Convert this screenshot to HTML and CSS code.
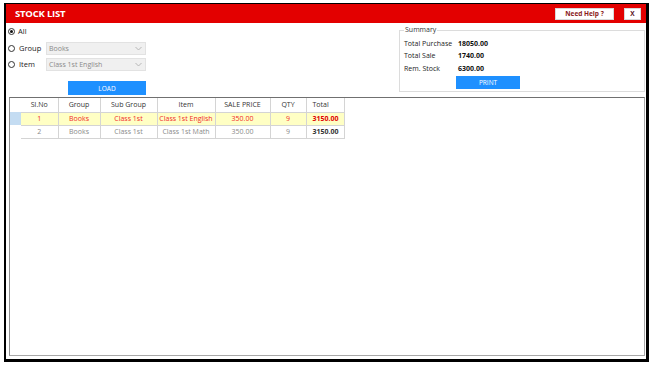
FILE: index.html
```html
<!DOCTYPE html>
<html>
<head>
<meta charset="utf-8">
<link rel="stylesheet" href="styles.css">
</head>
<body>
<div class="window">
  <div class="titlebar">
    <span class="title">STOCK LIST</span>
    <div class="tbtns">
      <span class="btn-help">Need Help ?</span>
      <span class="btn-x">X</span>
    </div>
  </div>
  <div class="top">
    <div class="filters">
      <div class="frow frow-all"><span class="radio checked"></span><span class="rlabel">All</span></div>
      <div class="frow"><span class="radio"></span><span class="rlabel lbl">Group</span>
        <div class="select"><span>Books</span><svg class="chev" width="7" height="5" viewBox="0 0 7 5"><path d="M0.5 1 L3.5 4 L6.5 1" fill="none" stroke="#b0b0b0" stroke-width="0.9"/></svg></div>
      </div>
      <div class="frow"><span class="radio"></span><span class="rlabel lbl">Item</span>
        <div class="select"><span>Class 1st English</span><svg class="chev" width="7" height="5" viewBox="0 0 7 5"><path d="M0.5 1 L3.5 4 L6.5 1" fill="none" stroke="#b0b0b0" stroke-width="0.9"/></svg></div>
      </div>
      <div class="load-wrap"><span class="bluebtn load">LOAD</span></div>
    </div>
    <fieldset class="summary">
      <legend>Summary</legend>
      <div class="srows">
        <div class="srow"><span class="sl">Total Purchase</span><span class="sv">18050.00</span></div>
        <div class="srow"><span class="sl">Total Sale</span><span class="sv">1740.00</span></div>
        <div class="srow"><span class="sl">Rem. Stock</span><span class="sv">6300.00</span></div>
      </div>
      <div class="print-wrap"><span class="bluebtn print">PRINT</span></div>
    </fieldset>
  </div>
  <div class="grid">
    <table class="tbl">
      <colgroup>
        <col class="c0"><col class="c1"><col class="c2"><col class="c3"><col class="c4"><col class="c5"><col class="c6"><col class="c7">
      </colgroup>
      <thead>
        <tr><th class="rh"></th><th>Sl.No</th><th>Group</th><th>Sub Group</th><th>Item</th><th>SALE PRICE</th><th>QTY</th><th class="tl">Total</th></tr>
      </thead>
      <tbody>
        <tr class="sel"><td class="rh rhsel"></td><td>1</td><td>Books</td><td>Class 1st</td><td>Class 1st English</td><td>350.00</td><td>9</td><td class="tl tot">3150.00</td></tr>
        <tr class="norm"><td class="rh"></td><td>2</td><td>Books</td><td>Class 1st</td><td>Class 1st Math</td><td>350.00</td><td>9</td><td class="tl tot">3150.00</td></tr>
      </tbody>
    </table>
  </div>
</div>
</body>
</html>
```
FILE: styles.css
```css
* { box-sizing: border-box; }
html, body { margin: 0; padding: 0; background: #fff; }
body { font-family: "Open Sans", "Noto Sans", sans-serif; color: #222; }

.window {
  margin: 3px 0 0 4px;
  width: 645px;
  height: 359px;
  border-style: solid;
  border-color: #000;
  border-width: 1px 3px 3px 2px;
  display: flex;
  flex-direction: column;
  background: #fff;
}

.titlebar {
  height: 19px;
  background: #e30000;
  display: flex;
  align-items: center;
  justify-content: space-between;
  padding: 0 5px 0 9px;
  flex: none;
}
.title { color: #fff; font-weight: 700; font-size: 9.5px; letter-spacing: -0.2px; }
.tbtns { display: flex; align-items: center; gap: 10px; }
.btn-help, .btn-x {
  background: #fff;
  border: 1px solid #d8d8d8;
  color: #8a1a1a;
  font-weight: 700;
  font-size: 6.5px;
  height: 12px;
  display: flex;
  align-items: center;
  justify-content: center;
}
.btn-help { width: 59px; }
.btn-x { width: 17px; color: #5a1020; }

.top { display: flex; justify-content: space-between; flex: none; height: 71px; }

.filters { padding: 3px 0 0 2px; width: 150px; }
.frow { display: flex; align-items: center; height: 14px; margin-bottom: 2px; }
.frow-all { height: 10px; margin-bottom: 5px; }
.radio {
  width: 7px; height: 7px; border-radius: 50%;
  border: 1px solid #333; background: #fff;
  display: inline-flex; align-items: center; justify-content: center;
  flex: none;
}
.radio.checked::after { content: ""; width: 3px; height: 3px; border-radius: 50%; background: #111; }
.rlabel { font-size: 7.5px; margin-left: 3px; color: #222; }
.lbl { width: 27px; margin-left: 4px; }
.select {
  width: 100px; height: 13px;
  background: #f0f0f0;
  border: 1px solid #e2e2e2;
  display: flex; align-items: center; justify-content: space-between;
  padding: 0 3px 0 2px;
  font-size: 7px; color: #8a8a8a;
}
.load-wrap { padding: 8px 0 0 60px; }
.bluebtn {
  background: #1e90ff;
  color: #fff;
  font-size: 6.5px;
  display: flex; align-items: center; justify-content: center;
}
.load { width: 78px; height: 14px; }

.summary {
  margin: 3px 1px 0 0;
  width: 246px;
  height: 66px;
  border: 1px solid #dcdcdc;
  padding: 0 0 0 4px;
  min-width: 0;
}
.summary legend { font-size: 7px; padding: 0 1px; margin-left: 0; color: #333; line-height: 8px; }
.srows { padding-top: 3px; }
.srow { display: flex; align-items: center; height: 12.5px; font-size: 7px; }
.sl { width: 54px; color: #222; }
.sv { font-weight: 700; color: #111; }
.print-wrap { padding: 1px 0 0 52px; }
.print { width: 64px; height: 13px; }

.grid {
  flex: 1;
  margin: 3px 1px 3px 3px;
  border: 1px solid #a8a8a8;
  border-top-color: #707070;
  border-left-color: #909090;
  background: #fff;
}
.tbl { border-collapse: collapse; table-layout: fixed; width: 334px; font-size: 7px; }
.c0 { width: 11px; } .c1 { width: 37px; } .c2 { width: 42px; } .c3 { width: 57px; }
.c4 { width: 58px; } .c5 { width: 55px; } .c6 { width: 36px; } .c7 { width: 38px; }
.tbl th, .tbl td {
  height: 13px; padding: 0; text-align: center; white-space: nowrap; overflow: hidden;
  border-right: 1px solid #d4d4d4; border-bottom: 1px solid #d4d4d4;
  font-weight: 400;
}
.tbl th { color: #333; height: 14px; }
.tbl .tl { text-align: left; padding-left: 6px; }
.tbl .rh { border-bottom: none; border-right: none; }
.tbl td.rhsel { background: #c4dcf2; }
.sel td { background: #ffffc4; color: #f02a2a; }
.sel td.tot { color: #e00000; font-weight: 700; }
.norm td { color: #8a8a8a; }
.norm td.tot { color: #333; font-weight: 700; }
.tbl td.rh { border-right: none; }
```
